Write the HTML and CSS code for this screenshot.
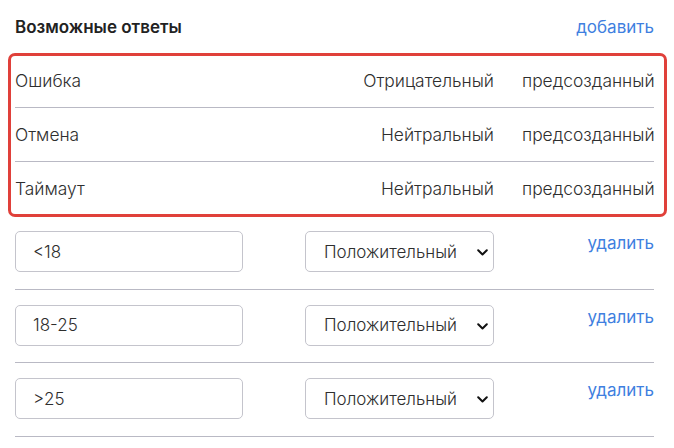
FILE: index.html
```html
<!DOCTYPE html>
<html lang="ru">
<head>
<meta charset="utf-8">
<link rel="stylesheet" href="styles.css">
</head>
<body>
<div class="panel">
  <div class="head">
    <span class="title">Возможные ответы</span>
    <a class="link">добавить</a>
  </div>
  <div class="presets">
    <div class="row preset">
      <span>Ошибка</span>
      <span class="right">Отрицательный</span>
      <span class="right">предсозданный</span>
    </div>
    <div class="row preset">
      <span>Отмена</span>
      <span class="right">Нейтральный</span>
      <span class="right">предсозданный</span>
    </div>
    <div class="row preset">
      <span>Таймаут</span>
      <span class="right">Нейтральный</span>
      <span class="right">предсозданный</span>
    </div>
    <div class="highlight"></div>
  </div>
  <div class="row answer">
    <input class="field" type="text" value="<18">
    <div class="select-wrap">
      <select class="select"><option>Положительный</option></select>
      <svg class="chev" width="11" height="7" viewBox="0 0 11 7"><path d="M1.2 1.2 L5.5 5.5 L9.8 1.2" fill="none" stroke="#111" stroke-width="2" stroke-linecap="round" stroke-linejoin="round"/></svg>
    </div>
    <a class="link right del">удалить</a>
  </div>
  <div class="row answer">
    <input class="field" type="text" value="18-25">
    <div class="select-wrap">
      <select class="select"><option>Положительный</option></select>
      <svg class="chev" width="11" height="7" viewBox="0 0 11 7"><path d="M1.2 1.2 L5.5 5.5 L9.8 1.2" fill="none" stroke="#111" stroke-width="2" stroke-linecap="round" stroke-linejoin="round"/></svg>
    </div>
    <a class="link right del">удалить</a>
  </div>
  <div class="row answer">
    <input class="field" type="text" value=">25">
    <div class="select-wrap">
      <select class="select"><option>Положительный</option></select>
      <svg class="chev" width="11" height="7" viewBox="0 0 11 7"><path d="M1.2 1.2 L5.5 5.5 L9.8 1.2" fill="none" stroke="#111" stroke-width="2" stroke-linecap="round" stroke-linejoin="round"/></svg>
    </div>
    <a class="link right del">удалить</a>
  </div>
</div>
</body>
</html>
```
FILE: styles.css
```css
html, body {
  margin: 0;
  background: #fff;
}
body {
  font-family: Inter, "Noto Sans", sans-serif;
  color: #333;
}
.panel {
  padding: 14px 20px 0 15px;
}
.head {
  display: flex;
  justify-content: space-between;
  align-items: center;
  height: 26px;
}
.title {
  font-size: 17px;
  font-weight: 600;
  color: #222;
}
.link {
  color: #3f7fe0;
  font-size: 17px;
  font-weight: 400;
  cursor: pointer;
}
.presets {
  margin-top: 14px;
  position: relative;
}
.row {
  display: grid;
  grid-template-columns: 262px 189px 132px;
  column-gap: 28px;
  border-bottom: 1px solid #b9b9c4;
  font-size: 17.4px;
  font-weight: 300;
}
.preset {
  height: 53px;
  align-items: center;
  color: #2e2e2e;
}
.right {
  text-align: right;
  white-space: nowrap;
}
.highlight {
  position: absolute;
  top: -1px;
  left: -7px;
  right: -13px;
  bottom: -1px;
  border: 3px solid #e0403a;
  border-radius: 7px;
  pointer-events: none;
}
.answer {
  padding: 15px 0 16.5px;
  align-items: start;
}
.field {
  box-sizing: border-box;
  width: 228px;
  height: 41px;
  margin: 0;
  padding: 0 0 0 17px;
  border: 1px solid #c4c4cc;
  border-radius: 5px;
  font: 300 17px Inter, "Noto Sans", sans-serif;
  color: #2e2e2e;
  outline: none;
}
.select-wrap {
  position: relative;
  width: 189px;
  height: 41px;
}
.select {
  appearance: none;
  -webkit-appearance: none;
  box-sizing: border-box;
  width: 100%;
  height: 41px;
  margin: 0;
  padding: 0 0 0 18px;
  border: 1px solid #c4c4cc;
  border-radius: 5px;
  background: #fff;
  font: 300 17px Inter, "Noto Sans", sans-serif;
  color: #2e2e2e;
}
.chev {
  position: absolute;
  right: 6px;
  top: 18px;
  pointer-events: none;
}
.del {
  font-size: 17px;
  line-height: 24px;
}
```
